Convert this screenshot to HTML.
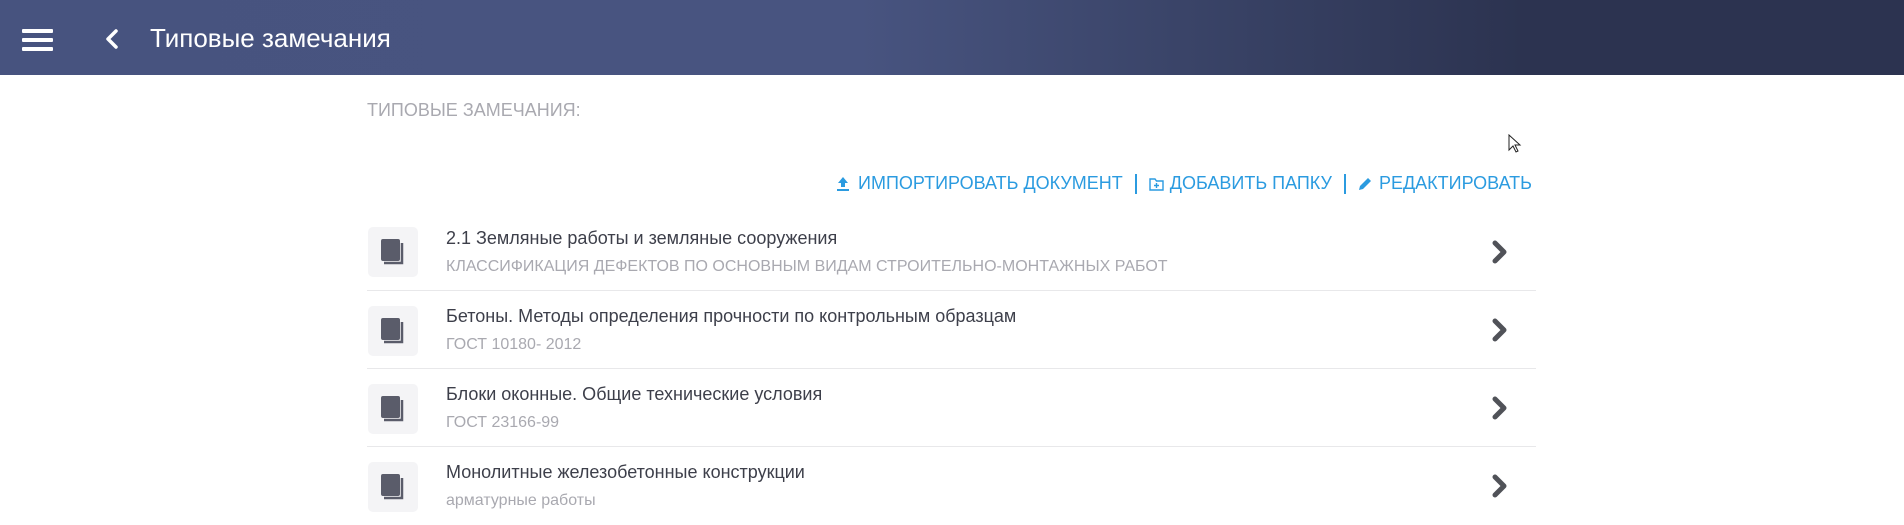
<!DOCTYPE html>
<html><head><meta charset="utf-8"><style>
*{margin:0;padding:0;box-sizing:border-box}
body{width:1904px;height:525px;overflow:hidden;background:#fff;font-family:"Liberation Sans",sans-serif;position:relative}
.hdr{position:absolute;left:0;top:0;width:1904px;height:75px;background:linear-gradient(to right,#47537f 0%,#485480 45%,#3a4468 62%,#2c3350 80%,#2c3350 100%)}
.ham{position:absolute;left:22px;top:29px;width:31px}
.ham i{display:block;height:4px;background:#fff;margin-bottom:5px;border-radius:1px}
.title{position:absolute;left:150px;top:23px;color:#fff;font-size:26px}
.sec{position:absolute;left:367px;top:100px;color:#a9a9b0;font-size:18px}
.acts{position:absolute;right:372px;top:173px;color:#2b9be0;font-size:18px;display:flex;align-items:center;white-space:nowrap}
.sep{display:inline-block;width:2px;height:20px;background:#2b9be0;margin:0 12px}
.row{position:absolute;left:367px;width:1169px;height:78px;border-bottom:1px solid #e8e8ea}
.ib{position:absolute;left:1px;top:14px;width:50px;height:50px;background:#f4f4f6;border-radius:5px}
.t{position:absolute;left:79px;top:15px;font-size:18px;color:#3d3f4a;white-space:nowrap}
.s{position:absolute;left:79px;top:45px;font-size:16px;color:#a9a9b0;white-space:nowrap}
.ch{position:absolute;left:1124px;top:26px}
</style></head><body>
<div class="hdr">
<div class="ham"><i></i><i></i><i></i></div>
<svg style="position:absolute;left:104px;top:28px" width="16" height="22" viewBox="0 0 16 22"><path d="M12 3L4 11l8 8" fill="none" stroke="#fff" stroke-width="3.5" stroke-linecap="round" stroke-linejoin="round"/></svg>
<div class="title">Типовые замечания</div>
</div>
<div class="sec">ТИПОВЫЕ ЗАМЕЧАНИЯ:</div>
<svg style="position:absolute;left:1508px;top:134px" width="14" height="20" viewBox="0 0 14 20"><path d="M1 1v15l4-4 3 6 2-1-3-6h5z" fill="#fff" stroke="#222" stroke-width="1"/></svg>
<div class="acts">
<svg width="14" height="16" viewBox="0 0 14 16" style="margin-right:8px"><path d="M7 1L2 7h3v4h4V7h3zM1 13h12v2H1z" fill="#2b9be0"/></svg>ИМПОРТИРОВАТЬ ДОКУМЕНТ<span class="sep"></span>
<svg width="15" height="14" viewBox="0 0 15 14" style="margin-right:6px"><path d="M1 2h5l1.5 2H14v9H1z" fill="none" stroke="#2b9be0" stroke-width="1.4"/><path d="M7.5 6v5M5 8.5h5" stroke="#2b9be0" stroke-width="1.4"/></svg>ДОБАВИТЬ ПАПКУ<span class="sep"></span>
<svg width="14" height="14" viewBox="0 0 14 14" style="margin-right:7px"><path d="M1 13l1-4 8-8 3 3-8 8z" fill="#2b9be0"/></svg>РЕДАКТИРОВАТЬ
</div>

<div class="row" style="top:213px"><div class="ib"><svg style="position:absolute;left:11px;top:10px" width="26" height="30" viewBox="0 0 26 30"><path d="M5 26h18V6" fill="none" stroke="#5a5c6a" stroke-width="2.5"/><rect x="2" y="2" width="19" height="22" rx="2" fill="#5a5c6a"/></svg></div>
<div class="t">2.1 Земляные работы и земляные сооружения</div><div class="s">КЛАССИФИКАЦИЯ ДЕФЕКТОВ ПО ОСНОВНЫМ ВИДАМ СТРОИТЕЛЬНО-МОНТАЖНЫХ РАБОТ</div>
<svg class="ch" width="18" height="26" viewBox="0 0 18 26"><path d="M4 4l9 9-9 9" fill="none" stroke="#505258" stroke-width="5" stroke-linecap="round" stroke-linejoin="round"/></svg></div>

<div class="row" style="top:291px"><div class="ib" style="top:15px"><svg style="position:absolute;left:11px;top:10px" width="26" height="30" viewBox="0 0 26 30"><path d="M5 26h18V6" fill="none" stroke="#5a5c6a" stroke-width="2.5"/><rect x="2" y="2" width="19" height="22" rx="2" fill="#5a5c6a"/></svg></div>
<div class="t">Бетоны. Методы определения прочности по контрольным образцам</div><div class="s">ГОСТ 10180- 2012</div>
<svg class="ch" width="18" height="26" viewBox="0 0 18 26"><path d="M4 4l9 9-9 9" fill="none" stroke="#505258" stroke-width="5" stroke-linecap="round" stroke-linejoin="round"/></svg></div>

<div class="row" style="top:369px"><div class="ib" style="top:15px"><svg style="position:absolute;left:11px;top:10px" width="26" height="30" viewBox="0 0 26 30"><path d="M5 26h18V6" fill="none" stroke="#5a5c6a" stroke-width="2.5"/><rect x="2" y="2" width="19" height="22" rx="2" fill="#5a5c6a"/></svg></div>
<div class="t">Блоки оконные. Общие технические условия</div><div class="s">ГОСТ 23166-99</div>
<svg class="ch" width="18" height="26" viewBox="0 0 18 26"><path d="M4 4l9 9-9 9" fill="none" stroke="#505258" stroke-width="5" stroke-linecap="round" stroke-linejoin="round"/></svg></div>

<div class="row" style="top:447px;border-bottom:none"><div class="ib" style="top:15px"><svg style="position:absolute;left:11px;top:10px" width="26" height="30" viewBox="0 0 26 30"><path d="M5 26h18V6" fill="none" stroke="#5a5c6a" stroke-width="2.5"/><rect x="2" y="2" width="19" height="22" rx="2" fill="#5a5c6a"/></svg></div>
<div class="t">Монолитные железобетонные конструкции</div><div class="s">арматурные работы</div>
<svg class="ch" width="18" height="26" viewBox="0 0 18 26"><path d="M4 4l9 9-9 9" fill="none" stroke="#505258" stroke-width="5" stroke-linecap="round" stroke-linejoin="round"/></svg></div>
</body></html>
